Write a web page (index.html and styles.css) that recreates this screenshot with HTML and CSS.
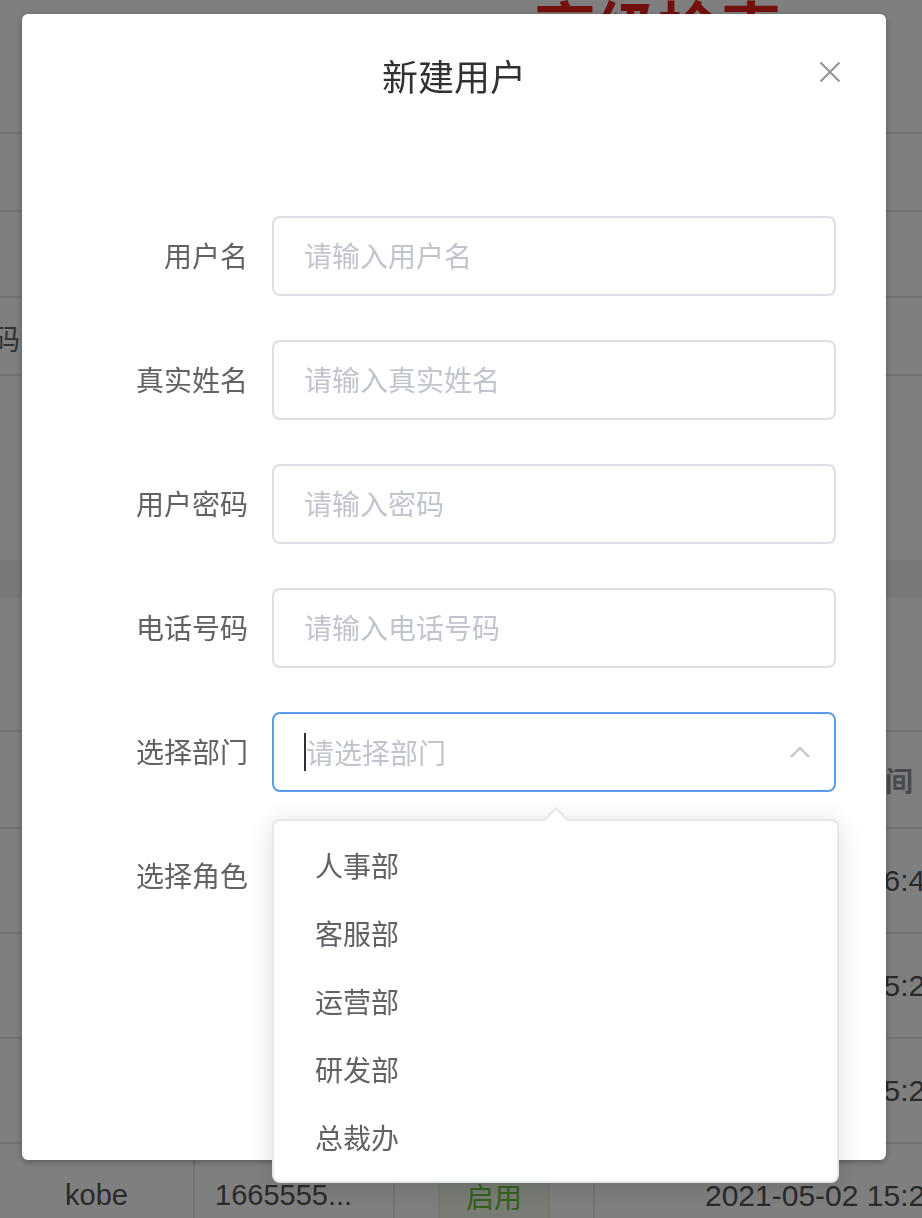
FILE: index.html
```html
<!DOCTYPE html>
<html lang="zh-CN">
<head>
    <meta charset="UTF-8">
    <meta name="viewport" content="width=device-width, initial-scale=1.0">
    <title>用户管理</title>
    <link rel="stylesheet" href="styles.css">
</head>
<body>
    <!-- page behind the dialog -->
    <div class="page">
        <div class="page-head">
            <h2 class="page-title">高级检索</h2>
        </div>
        <div class="filter-row row-a"></div>
        <div class="filter-row row-b"></div>
        <div class="filter-row row-a">
            <div class="filter-label"><span>电话号码</span></div>
        </div>
        <div class="filter-row row-c"></div>
        <div class="toolbar"></div>
        <div class="toolbar-gap"></div>

        <div class="table-row table-head">
            <div class="cell"></div>
            <div class="cell"></div>
            <div class="cell"></div>
            <div class="cell cell-time head-time">创建时间</div>
        </div>
        <div class="table-row">
            <div class="cell">coderwhy</div>
            <div class="cell">1866666...</div>
            <div class="cell"><span class="tag">启用</span></div>
            <div class="cell cell-time">2021-05-01 16:45:12</div>
        </div>
        <div class="table-row">
            <div class="cell">james</div>
            <div class="cell">1777777...</div>
            <div class="cell"><span class="tag">启用</span></div>
            <div class="cell cell-time">2021-05-02 15:21:08</div>
        </div>
        <div class="table-row">
            <div class="cell">curry</div>
            <div class="cell">1888888...</div>
            <div class="cell"><span class="tag">启用</span></div>
            <div class="cell cell-time">2021-05-02 15:23:40</div>
        </div>
        <div class="table-row">
            <div class="cell">kobe</div>
            <div class="cell cell-phone">1665555...</div>
            <div class="cell"><span class="tag">启用</span></div>
            <div class="cell cell-time">2021-05-02 15:25:33</div>
        </div>
    </div>

    <!-- new user dialog -->
    <div class="modal-mask">
        <div class="dialog">
            <div class="dialog-header">
                <span class="dialog-title">新建用户</span>
                <button class="dialog-close" aria-label="关闭">
                    <svg width="32" height="32" viewBox="0 0 32 32">
                        <path d="M6.5 6.5 L25.5 25.5 M25.5 6.5 L6.5 25.5" stroke="#909399" stroke-width="2" fill="none"/>
                    </svg>
                </button>
            </div>
            <div class="dialog-body">
                <form class="user-form">
                    <div class="form-item">
                        <label class="form-label">用户名</label>
                        <div class="form-control"><input class="text-input" type="text" placeholder="请输入用户名"></div>
                    </div>
                    <div class="form-item">
                        <label class="form-label">真实姓名</label>
                        <div class="form-control"><input class="text-input" type="text" placeholder="请输入真实姓名"></div>
                    </div>
                    <div class="form-item">
                        <label class="form-label">用户密码</label>
                        <div class="form-control"><input class="text-input" type="password" placeholder="请输入密码"></div>
                    </div>
                    <div class="form-item">
                        <label class="form-label">电话号码</label>
                        <div class="form-control"><input class="text-input" type="text" placeholder="请输入电话号码"></div>
                    </div>
                    <div class="form-item">
                        <label class="form-label">选择部门</label>
                        <div class="form-control">
                            <div class="select-input is-focus">
                                <span class="select-caret"></span>
                                <span class="select-placeholder">请选择部门</span>
                                <svg class="select-arrow" width="20" height="12" viewBox="0 0 20 12">
                                    <path d="M1 11 L10 2 L19 11" stroke="#c0c4cc" stroke-width="2" fill="none"/>
                                </svg>
                            </div>
                            <div class="select-dropdown">
                                <ul class="dropdown-list">
                                    <li class="dropdown-item">人事部</li>
                                    <li class="dropdown-item">客服部</li>
                                    <li class="dropdown-item">运营部</li>
                                    <li class="dropdown-item">研发部</li>
                                    <li class="dropdown-item">总裁办</li>
                                </ul>
                            </div>
                        </div>
                    </div>
                    <div class="form-item">
                        <label class="form-label">选择角色</label>
                        <div class="form-control">
                            <div class="select-input">
                                <span class="select-placeholder">请选择角色</span>
                            </div>
                        </div>
                    </div>
                </form>
            </div>
        </div>
    </div>
</body>
</html>
```

FILE: styles.css
```css
* {
    box-sizing: border-box;
}
body {
    margin: 0;
    font-family: "Liberation Sans", "Noto Sans CJK SC", sans-serif;
    color: #606266;
    background-color: #fff;
    overflow: hidden;
}

/* page behind the mask */
.page {
    width: 922px;
    height: 1218px;
    overflow: hidden;
}
.page-head {
    height: 136px;
}
.page-title {
    margin: -4px 0 0 534px;
    font-family: "Noto Sans CJK SC", sans-serif;
    font-size: 62px;
    line-height: 1;
    font-weight: 700;
    color: #e6201a;
    white-space: nowrap;
}
.filter-row {
    border-top: 2px solid #e4e4e4;
}
.row-a {
    height: 78px;
}
.row-b {
    height: 86px;
}
.row-c {
    height: 186px;
}
.filter-label {
    display: flex;
    justify-content: flex-end;
    align-items: center;
    width: 20px;
    height: 80px;
    overflow: hidden;
    font-family: "Noto Sans CJK SC", sans-serif;
    font-size: 28px;
    white-space: nowrap;
}
.toolbar {
    height: 38px;
    background-color: #f2f2f2;
}
.toolbar-gap {
    height: 132px;
}
.table-row {
    display: grid;
    grid-template-columns: 195px 200px 200px 1fr;
    height: 105px;
    border-top: 2px solid #e4e4e4;
    font-size: 29px;
    color: #555;
}
.table-head {
    height: 97px;
}
.cell {
    display: flex;
    align-items: center;
    justify-content: center;
    border-right: 2px solid #e4e4e4;
    white-space: nowrap;
    overflow: hidden;
}
.cell-phone {
    justify-content: flex-start;
    padding-left: 20px;
}
.cell-time {
    justify-content: flex-start;
    padding-left: 110px;
    border-right: none;
    font-size: 30px;
}
.head-time {
    padding-left: 206px;
    font-family: "Noto Sans CJK SC", sans-serif;
    font-size: 28px;
    font-weight: 700;
    color: #909399;
}
.tag {
    display: inline-flex;
    align-items: center;
    justify-content: center;
    width: 112px;
    height: 64px;
    border: 2px solid #e1f3d8;
    border-radius: 8px;
    background-color: #f0f9eb;
    color: #67c23a;
    font-family: "Noto Sans CJK SC", sans-serif;
    font-size: 28px;
}

/* dialog */
.modal-mask {
    position: fixed;
    top: 0;
    left: 0;
    right: 0;
    bottom: 0;
    background-color: rgba(0, 0, 0, 0.5);
}
.dialog {
    position: relative;
    width: 864px;
    height: 1146px;
    margin: 14px 0 0 22px;
    background-color: #fff;
    border-radius: 6px;
    box-shadow: 0 2px 6px rgba(0, 0, 0, 0.3);
    font-family: "Noto Sans CJK SC", sans-serif;
}
.dialog-header {
    padding: 37px 40px 23px;
    text-align: center;
}
.dialog-title {
    font-size: 36px;
    line-height: 48px;
    color: #303133;
}
.dialog-close {
    position: absolute;
    top: 42px;
    right: 40px;
    width: 32px;
    height: 32px;
    padding: 0;
    border: none;
    background: none;
    cursor: pointer;
}
.dialog-close svg {
    display: block;
}
.dialog-body {
    padding: 94px 50px 0 40px;
}
.user-form {
    margin: 0;
}
.form-item {
    display: flex;
    margin-bottom: 44px;
}
.form-label {
    flex-shrink: 0;
    width: 210px;
    padding-right: 24px;
    text-align: right;
    font-size: 28px;
    line-height: 78px;
    color: #606266;
}
.form-control {
    position: relative;
    flex: 1;
    height: 80px;
}
.text-input {
    display: block;
    width: 100%;
    height: 80px;
    padding: 0 30px 2px;
    border: 2px solid #dcdfe6;
    border-radius: 8px;
    font-family: inherit;
    font-size: 28px;
    color: #606266;
    outline: none;
}
.text-input::placeholder {
    color: #c0c4cc;
}

/* select */
.select-input {
    display: flex;
    align-items: center;
    height: 80px;
    padding: 0 24px 0 30px;
    border: 2px solid #dcdfe6;
    border-radius: 8px;
}
.select-input.is-focus {
    border-color: #5a9ce8;
}
.select-caret {
    width: 2px;
    height: 38px;
    background-color: #303133;
}
.select-placeholder {
    flex: 1;
    font-size: 28px;
    color: #c0c4cc;
}
.select-arrow {
    display: block;
}
.select-dropdown {
    position: absolute;
    top: 107px;
    left: 0;
    width: 567px;
    padding: 10px 0;
    border: 2px solid #e4e7ed;
    border-radius: 8px;
    background-color: #fff;
    box-shadow: 0 4px 24px rgba(0, 0, 0, 0.14);
    z-index: 10;
}
.select-dropdown::before,
.select-dropdown::after {
    content: "";
    position: absolute;
    width: 0;
    height: 0;
    border-style: solid;
    border-color: transparent;
}
.select-dropdown::before {
    top: -26px;
    left: 270px;
    border-width: 12px;
    border-bottom-color: #e4e7ed;
}
.select-dropdown::after {
    top: -22px;
    left: 271px;
    border-width: 11px;
    border-bottom-color: #fff;
}
.dropdown-list {
    margin: 0;
    padding: 0;
    list-style: none;
}
.dropdown-item {
    height: 68px;
    line-height: 68px;
    padding: 0 41px;
    font-size: 28px;
    color: #606266;
}
```
